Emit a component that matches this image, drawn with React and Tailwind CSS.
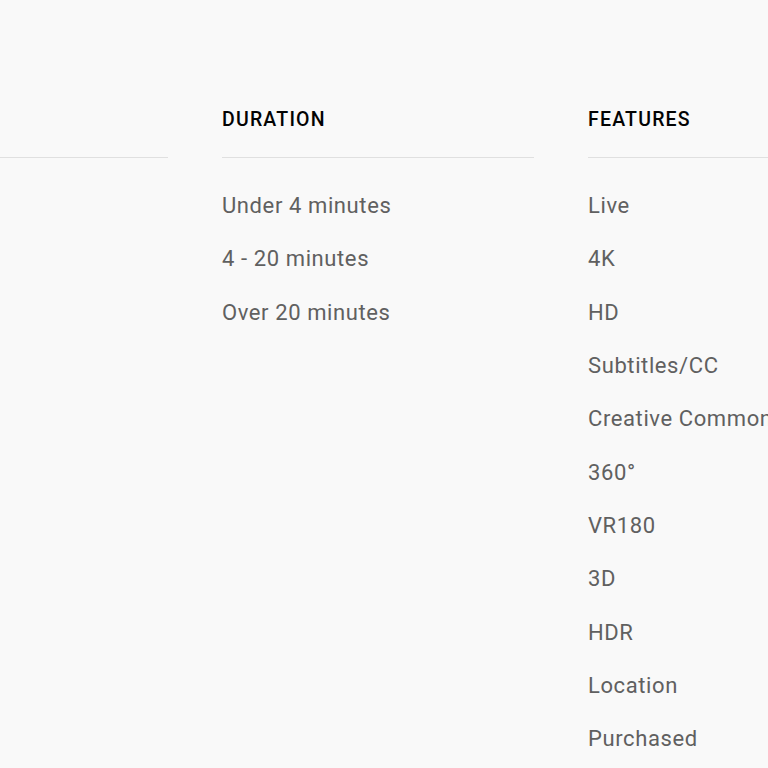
export default function App() {
  const cols = [
    { title: "", items: [] },
    { title: "DURATION", items: ["Under 4 minutes", "4 - 20 minutes", "Over 20 minutes"] },
    {
      title: "FEATURES",
      items: ["Live", "4K", "HD", "Subtitles/CC", "Creative Commons", "360°", "VR180", "3D", "HDR", "Location", "Purchased"],
    },
  ];
  return (
    <div className="w-[768px] h-[768px] overflow-hidden bg-[#f9f9f9]" style={{ fontFamily: "Roboto, sans-serif" }}>
      <div className="flex gap-[54px] ml-[-144px] pt-[108px]">
        {cols.map((c, i) => (
          <div key={i} className="w-[312px] shrink-0">
            <div className="h-[50px] border-b border-[#e0e0e0] text-[19.5px] leading-[24px] font-medium tracking-[1.2px] text-[#030303] whitespace-nowrap">
              {c.title}
            </div>
            <div className="pt-[21px]">
              {c.items.map((it) => (
                <div key={it} className="h-[53.33px] flex items-center text-[22px] tracking-[0.6px] text-[#606060] whitespace-nowrap">
                  {it}
                </div>
              ))}
            </div>
          </div>
        ))}
      </div>
    </div>
  );
}
